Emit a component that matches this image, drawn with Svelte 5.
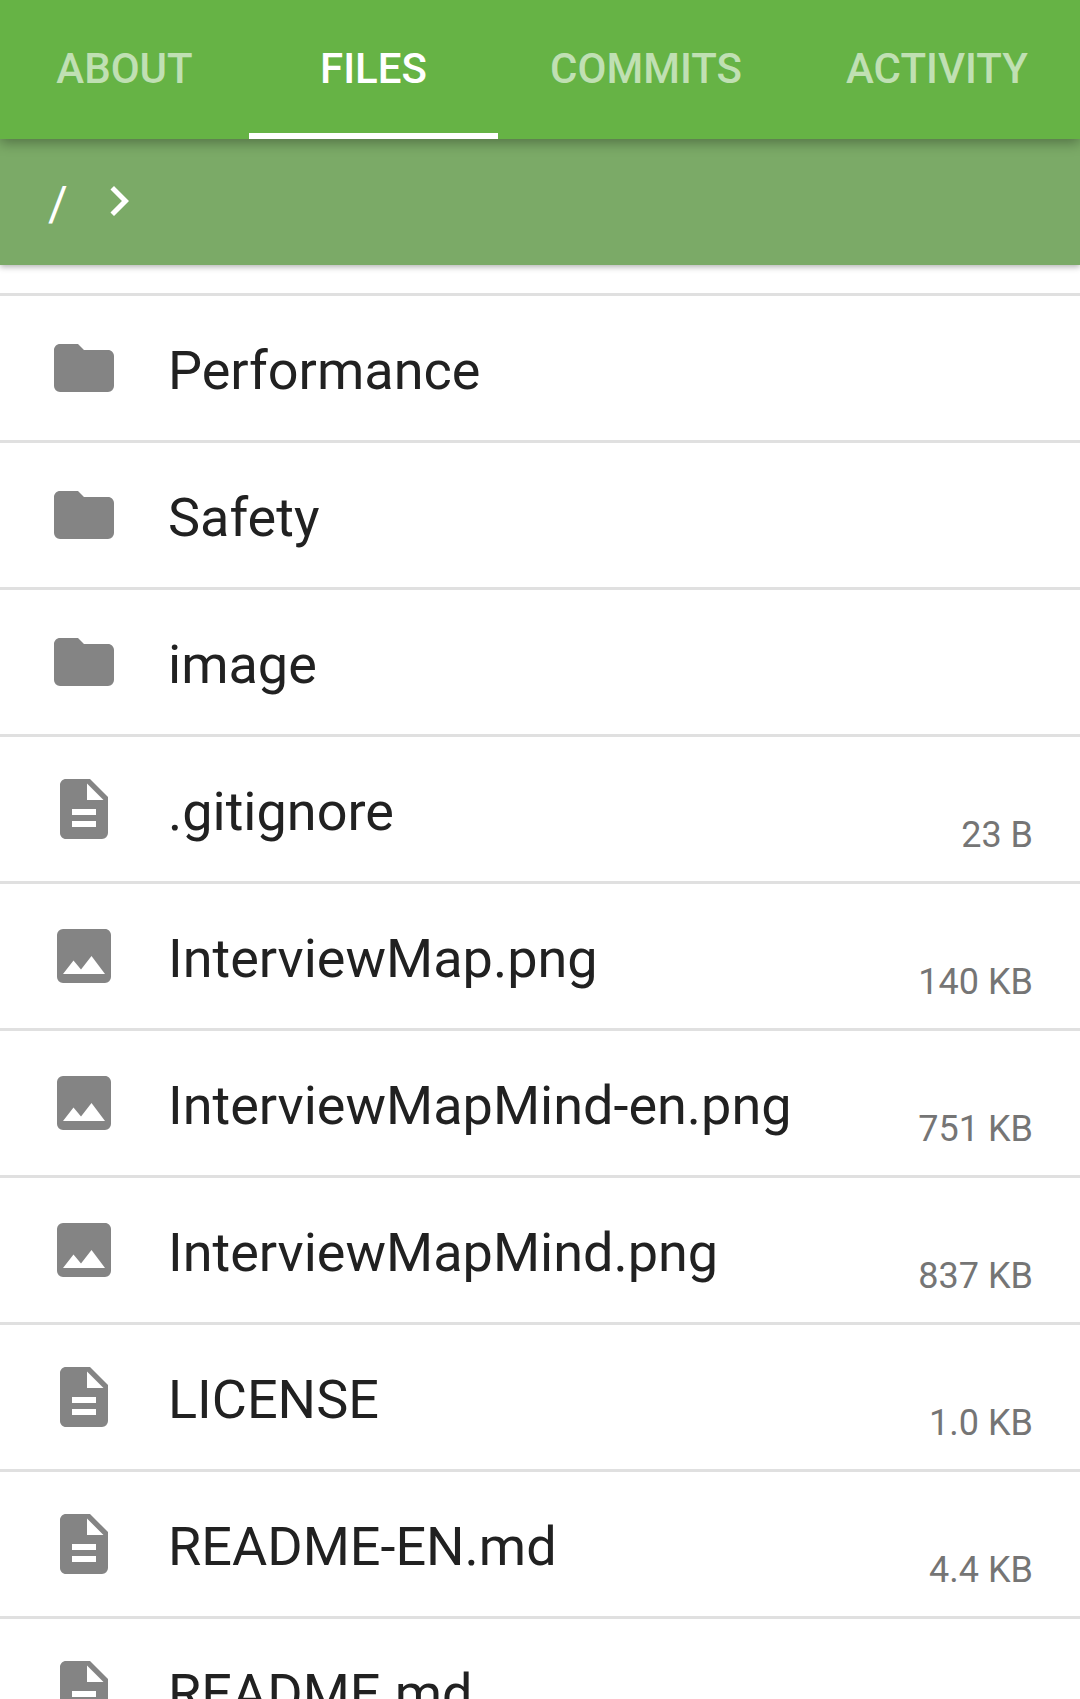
<script>
  const tabs = ['About', 'Files', 'Commits', 'Activity'];
  const active = 'Files';

  const files = [
    { name: 'Performance', kind: 'folder' },
    { name: 'Safety', kind: 'folder' },
    { name: 'image', kind: 'folder' },
    { name: '.gitignore', kind: 'doc', size: '23 B' },
    { name: 'InterviewMap.png', kind: 'image', size: '140 KB' },
    { name: 'InterviewMapMind-en.png', kind: 'image', size: '751 KB' },
    { name: 'InterviewMapMind.png', kind: 'image', size: '837 KB' },
    { name: 'LICENSE', kind: 'doc', size: '1.0 KB' },
    { name: 'README-EN.md', kind: 'doc', size: '4.4 KB' },
    { name: 'README.md', kind: 'doc' }
  ];

  const icons = {
    folder: 'M10,4H4C2.89,4 2,4.89 2,6V18A2,2 0 0,0 4,20H20A2,2 0 0,0 22,18V8C22,6.89 21.1,6 20,6H12L10,4Z',
    doc: 'M13,9H18.5L13,3.5V9M6,2H14L20,8V20A2,2 0 0,1 18,22H6C4.89,22 4,21.1 4,20V4C4,2.89 4.89,2 6,2M16,18V16H8V18H16M16,14V12H8V14H16Z',
    image: 'M8.5,13.5L11,16.5L14.5,12L19,18H5M21,19V5C21,3.89 20.1,3 19,3H5A2,2 0 0,0 3,5V19A2,2 0 0,0 5,21H19A2,2 0 0,0 21,19Z'
  };
</script>

<div class="screen">
  <nav class="tabs">
    {#each tabs as tab}
      <button class="tab" class:active={tab === active}>{tab}</button>
    {/each}
  </nav>

  <div class="crumbs">
    <span class="root">/</span>
    <svg class="chevron" viewBox="0 0 24 24"><path d="M8.59,16.58L13.17,12L8.59,7.41L10,6L16,12L10,18L8.59,16.58Z" /></svg>
  </div>

  <ul class="list">
    {#each files as file}
      <li class="row">
        <svg class="icon" viewBox="0 0 24 24"><path fill-rule="evenodd" d={icons[file.kind]} /></svg>
        <span class="name">{file.name}</span>
        {#if file.size}<span class="size">{file.size}</span>{/if}
      </li>
    {/each}
  </ul>
</div>

<style>
  :global(body) {
    margin: 0;
    background: #fff;
  }

  .screen {
    display: flex;
    flex-direction: column;
    width: 1080px;
    height: 1699px;
    overflow: hidden;
    background: #fff;
    font-family: Roboto, 'Liberation Sans', sans-serif;
  }

  .tabs {
    position: relative;
    z-index: 2;
    flex: none;
    display: grid;
    grid-template-columns: 249px 249px 296px 286px;
    height: 139px;
    background: #66b345;
    box-shadow: 0 4px 12px rgba(0, 0, 0, 0.32);
  }

  .tab {
    box-sizing: border-box;
    margin: 0;
    padding: 5px 0 0;
    border: 0;
    border-bottom: 6px solid transparent;
    background: none;
    color: rgba(255, 255, 255, 0.6);
    font: 500 42px/1 Roboto, 'Liberation Sans', sans-serif;
    text-transform: uppercase;
  }

  .tab.active {
    border-bottom-color: #fff;
    color: #fff;
  }

  .crumbs {
    position: relative;
    z-index: 1;
    flex: none;
    box-sizing: border-box;
    display: flex;
    align-items: center;
    gap: 21px;
    height: 126px;
    padding: 0 48px 3px;
    background: #7baa67;
    color: #fff;
    box-shadow: 0 2px 6px rgba(0, 0, 0, 0.3);
  }

  .root {
    padding-top: 7px;
    font-size: 48px;
    line-height: 56px;
  }

  .chevron {
    width: 60px;
    height: 60px;
    fill: #fff;
  }

  .list {
    flex: none;
    margin: 28px 0 0;
    padding: 0;
    list-style: none;
  }

  .row {
    display: flex;
    align-items: center;
    height: 144px;
    padding: 0 47px 0 48px;
    border-top: 3px solid #e0e0e0;
  }

  .icon {
    flex: none;
    width: 72px;
    height: 72px;
    margin-right: 48px;
    fill: #848484;
  }

  .name {
    flex: 1;
    padding-top: 5px;
    color: #212121;
    font-size: 54px;
    line-height: 64px;
    white-space: nowrap;
  }

  .size {
    align-self: flex-end;
    padding-bottom: 25px;
    color: #757575;
    font-size: 36px;
    line-height: 42px;
  }
</style>
